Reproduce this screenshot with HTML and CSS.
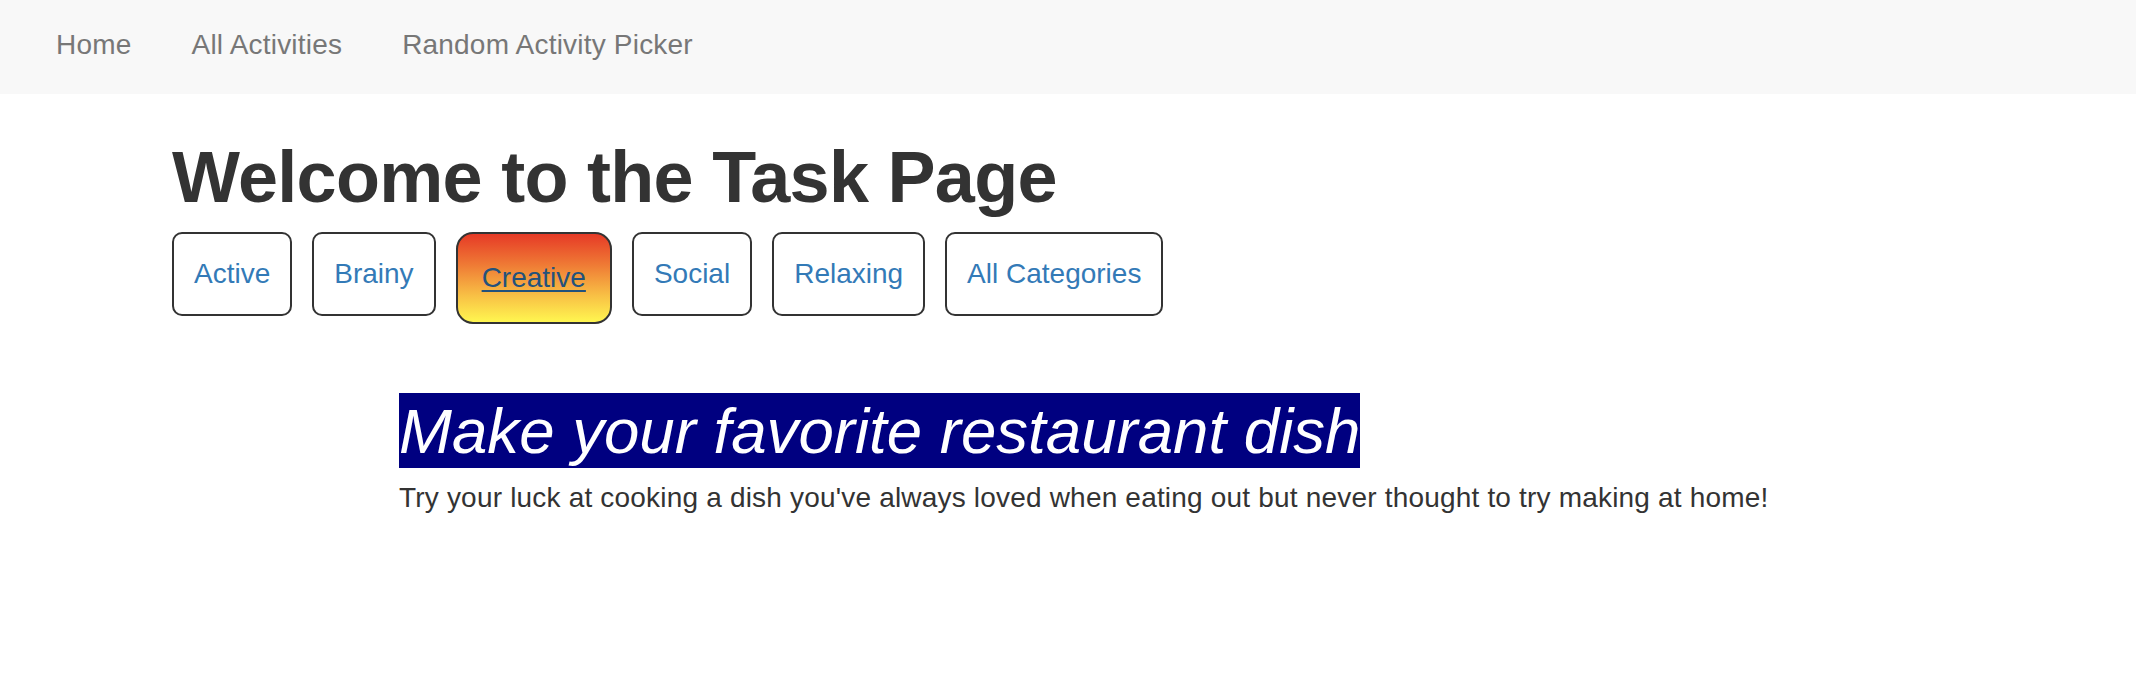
FILE: index.html
```html
<!DOCTYPE html>
<html lang="en">
<head>
<meta charset="utf-8">
<title>Task Page</title>
<link rel="stylesheet" href="styles.css">
</head>
<body>
<nav class="navbar">
  <a class="nav-link" href="#">Home</a>
  <a class="nav-link" href="#">All Activities</a>
  <a class="nav-link" href="#">Random Activity Picker</a>
</nav>
<main class="container">
  <h1 class="page-title">Welcome to the Task Page</h1>
  <div class="categories">
    <a class="cat-btn" href="#">Active</a>
    <a class="cat-btn" href="#">Brainy</a>
    <a class="cat-btn cat-active" href="#">Creative</a>
    <a class="cat-btn" href="#">Social</a>
    <a class="cat-btn" href="#">Relaxing</a>
    <a class="cat-btn" href="#">All Categories</a>
  </div>
  <section class="task">
    <h2 class="task-title"><span class="task-title-text">Make your favorite restaurant dish</span></h2>
    <p class="task-desc">Try your luck at cooking a dish you've always loved when eating out but never thought to try making at home!</p>
  </section>
</main>
</body>
</html>
```
FILE: styles.css
```css
* { box-sizing: border-box; }
html, body {
  margin: 0;
  padding: 0;
  background: #fff;
  font-family: "Liberation Sans", Arial, sans-serif;
  color: #333;
  font-size: 28px;
  line-height: 1.42857;
}
.navbar {
  display: flex;
  align-items: center;
  height: 94px;
  background: #f8f8f8;
  padding: 0 0 5px 26px;
}
.nav-link {
  color: #777;
  text-decoration: none;
  padding: 0 30px;
  font-size: 28px;
  line-height: 40px;
  letter-spacing: 0.2px;
}
.container {
  padding-left: 172px;
}
.page-title {
  margin: 44px 0 15px;
  font-size: 72px;
  line-height: 1.1;
  font-weight: bold;
  letter-spacing: -0.7px;
  color: #333;
}
.categories {
  display: flex;
  align-items: flex-start;
  gap: 20px;
}
.cat-btn {
  display: block;
  border: 2px solid #333;
  border-radius: 10px;
  padding: 20px;
  color: #337ab7;
  text-decoration: none;
  font-size: 28px;
  line-height: 40px;
  background: #fff;
}
.cat-active {
  padding: 24px;
  border-radius: 17px;
  color: #23527c;
  text-decoration: underline;
  text-underline-offset: 3px;
  background: linear-gradient(to bottom, #e63a26 0%, #ef7a35 35%, #f8c045 70%, #fff650 100%);
}
.task {
  margin-left: 227px;
}
.task-title {
  margin: 72px 0 12px;
  font-size: 63.6px;
  line-height: 1.1;
  font-weight: normal;
  font-style: italic;
}
.task-title-text {
  background: #000080;
  color: #fff;
  padding: 2px 0;
}
.task-desc {
  margin: 0;
  font-size: 28px;
  line-height: 40px;
  letter-spacing: 0.19px;
  color: #333;
}
```
